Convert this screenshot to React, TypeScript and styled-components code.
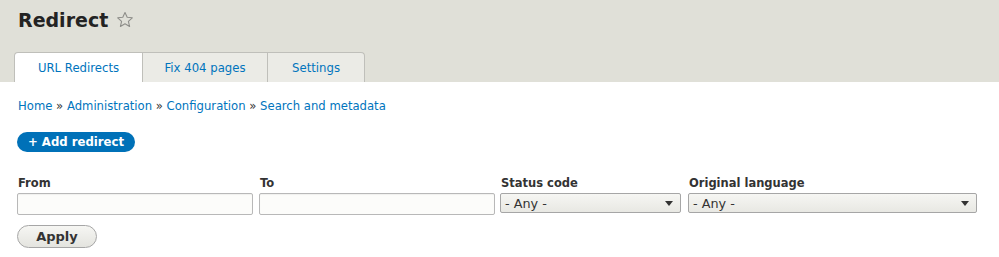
import styled, { createGlobalStyle } from 'styled-components'

const GlobalStyle = createGlobalStyle`
  body {
    margin: 0;
    background: #fff;
    font-family: "DejaVu Sans", Verdana, sans-serif;
    color: #333;
  }
`

const Header = styled.div`
  background: #e0e0d8;
  padding: 7px 0 0 14px;
  height: 75px;
  display: flex;
  flex-direction: column;
  justify-content: space-between;
`

const TitleRow = styled.div`
  display: flex;
  align-items: center;
  gap: 8px;
  padding-left: 4px;
`

const Title = styled.h1`
  margin: 0;
  font-size: 19px;
  font-weight: bold;
  color: #232323;
  line-height: 26px;
`

const Tabs = styled.ul`
  display: flex;
  margin: 0;
  padding: 0;
  list-style: none;
`

const Tab = styled.li<{ $active?: boolean; $width: number }>`
  width: ${(p) => p.$width}px;
  height: 30px;
  box-sizing: border-box;
  border: 1px solid #bfbfba;
  border-bottom: none;
  border-left-width: ${(p) => (p.$active ? 1 : 0)}px;
  border-radius: ${(p) => (p.$active ? '4px 0 0 0' : '0')};
  background: ${(p) => (p.$active ? '#fff' : '#ebebe6')};
  display: flex;
  align-items: center;
  justify-content: center;
  font-size: 11.7px;
  color: #0074bd;

  &:last-child {
    border-radius: 0 4px 0 0;
  }
`

const Content = styled.div`
  padding: 16px 17px 0 17px;
`

const Breadcrumb = styled.nav`
  font-size: 11.65px;
  color: #0074bd;
  padding-left: 1px;
  line-height: 16px;

  span {
    color: #333;
  }
`

const AddButton = styled.button`
  margin-top: 18px;
  height: 20px;
  width: 118px;
  border: none;
  border-radius: 10px;
  background: #0071b8;
  color: #fff;
  font-family: inherit;
  font-weight: bold;
  font-size: 11.7px;
  padding: 0;
  cursor: pointer;
`

const FilterRow = styled.div`
  margin-top: 24px;
  display: flex;
`

const Field = styled.div<{ $width: number; $gap: number }>`
  width: ${(p) => p.$width}px;
  margin-right: ${(p) => p.$gap}px;
  display: flex;
  flex-direction: column;
`

const Label = styled.label`
  font-size: 11.5px;
  font-weight: bold;
  color: #333;
  line-height: 14px;
  padding-left: 1px;
  margin-bottom: 3px;
`

const TextInput = styled.input`
  height: 22px;
  box-sizing: border-box;
  border: 1px solid #b8b8b8;
  border-radius: 2px;
  background: #fcfcfa;
  box-shadow: inset 0 1px 1px rgba(0, 0, 0, 0.05);
`

const Select = styled.div`
  height: 20px;
  box-sizing: border-box;
  border: 1px solid #a6a6a6;
  border-radius: 2px;
  background: linear-gradient(#f6f6f3, #e8e8e3);
  display: flex;
  align-items: center;
  justify-content: space-between;
  padding: 0 7px 0 4px;
  font-size: 12.8px;
  color: #333;
`

const Arrow = styled.span`
  width: 0;
  height: 0;
  border-left: 4px solid transparent;
  border-right: 4px solid transparent;
  border-top: 5px solid #333;
`

const ApplyButton = styled.button`
  margin-top: 10px;
  width: 80px;
  height: 23px;
  border: 1px solid #a6a6a6;
  border-radius: 12px;
  background: linear-gradient(#f6f6f3, #e4e4df);
  font-family: inherit;
  font-weight: bold;
  font-size: 13px;
  color: #333;
  padding: 0;
`

const Star = () => (
  <svg width="18" height="18" viewBox="0 0 18 18">
    <path
      d="M9 1.5 L11.2 6.3 L16.3 6.8 L12.4 10.3 L13.6 15.5 L9 12.8 L4.4 15.5 L5.6 10.3 L1.7 6.8 L6.8 6.3 Z"
      fill="none"
      stroke="#8e8e8a"
      strokeWidth="1.1"
      strokeLinejoin="round"
    />
  </svg>
)

export default function App() {
  return (
    <>
      <GlobalStyle />
      <Header>
        <TitleRow>
          <Title>Redirect</Title>
          <Star />
        </TitleRow>
        <Tabs>
          <Tab $active $width={129}>URL Redirects</Tab>
          <Tab $width={125}>Fix 404 pages</Tab>
          <Tab $width={97}>Settings</Tab>
        </Tabs>
      </Header>
      <Content>
        <Breadcrumb>
          Home <span>»</span> Administration <span>»</span> Configuration <span>»</span> Search and
          metadata
        </Breadcrumb>
        <AddButton>+ Add redirect</AddButton>
        <FilterRow>
          <Field $width={236} $gap={6}>
            <Label>From</Label>
            <TextInput />
          </Field>
          <Field $width={236} $gap={5}>
            <Label>To</Label>
            <TextInput />
          </Field>
          <Field $width={181} $gap={7}>
            <Label>Status code</Label>
            <Select>
              - Any -<Arrow />
            </Select>
          </Field>
          <Field $width={289} $gap={0}>
            <Label>Original language</Label>
            <Select>
              - Any -<Arrow />
            </Select>
          </Field>
        </FilterRow>
        <ApplyButton>Apply</ApplyButton>
      </Content>
    </>
  )
}
